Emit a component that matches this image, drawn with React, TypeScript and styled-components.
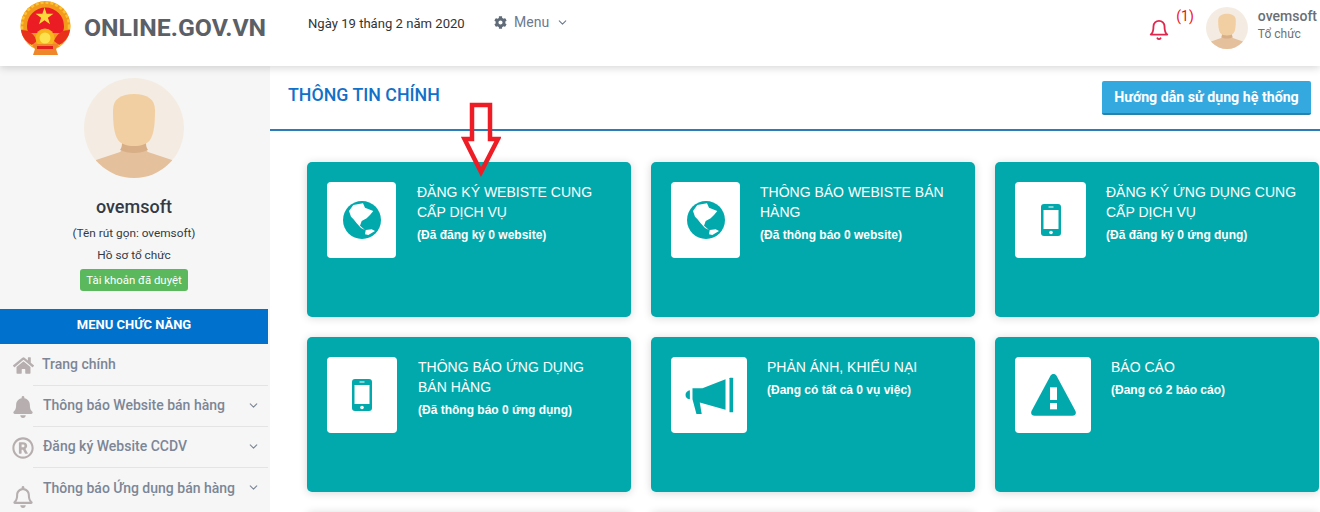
import React from "react";
import styled, { createGlobalStyle } from "styled-components";
import { FaHome, FaBell, FaRegBell, FaRegRegistered, FaCog } from "react-icons/fa";
import { FiBell, FiChevronDown } from "react-icons/fi";

const GlobalStyle = createGlobalStyle`
  html, body {
    margin: 0;
    padding: 0;
    height: 100%;
    overflow: hidden;
    background: #fff;
    font-family: Roboto, "Liberation Sans", sans-serif;
  }
  * { box-sizing: border-box; }
`;

const Page = styled.div`
  width: 1320px;
  height: 512px;
  overflow: hidden;
  position: relative;
`;

const Header = styled.header`
  height: 66px;
  display: flex;
  align-items: flex-start;
  background: #fff;
  position: relative;
  z-index: 2;
  box-shadow: 0 2px 8px rgba(0, 0, 0, 0.16);
`;

const Brand = styled.div`
  width: 308px;
  display: flex;
  align-items: center;
  gap: 11px;
  padding: 1px 0 0 19px;
`;

const BrandName = styled.div`
  font-size: 24.8px;
  font-weight: 700;
  color: #5b6067;
  white-space: nowrap;
  margin-top: -1px;
`;

const DateText = styled.div`
  width: 186px;
  font-size: 13.1px;
  line-height: 16px;
  margin-top: 16px;
  color: #333;
  white-space: nowrap;
`;

const TopMenu = styled.div`
  display: flex;
  align-items: center;
  gap: 7px;
  margin-top: 14px;
  font-size: 14px;
  color: #6c7a8f;
  svg:first-child { color: #5f6b78; font-size: 13px; }
`;

const HeaderRight = styled.div`
  margin-left: auto;
  display: flex;
  align-items: flex-start;
  padding: 7px 3px 0 0;
`;

const BellWrap = styled.div`
  display: flex;
  align-items: flex-start;
  gap: 6px;
  margin: 1px 12px 0 0;
  color: #e0284f;
  svg { margin-top: 11px; }
`;

const BellCount = styled.span`
  font-size: 14px;
  line-height: 16px;
  color: #f01010;
`;

const UserText = styled.div`
  margin-left: 10px;
`;

const UserName = styled.div`
  font-size: 14px;
  font-weight: 500;
  line-height: 18px;
  color: #6a6f76;
`;

const UserRole = styled.div`
  font-size: 12px;
  line-height: 18px;
  color: #6d7278;
`;

const Content = styled.div`
  display: grid;
  grid-template-columns: 270px 1fr;
  height: 446px;
`;

const Sidebar = styled.aside`
  background: #f6f6f6;
  padding-top: 12px;
  display: flex;
  flex-direction: column;
`;

const Profile = styled.div`
  display: flex;
  flex-direction: column;
  align-items: center;
  width: 268px;
  height: 231px;
`;

const ProfileName = styled.div`
  font-size: 18px;
  font-weight: 500;
  line-height: 22px;
  margin: 18px 0 4px;
  color: #333a45;
`;

const ProfileLine = styled.div`
  font-size: 11.8px;
  line-height: 22px;
  color: #333a45;
`;

const Badge = styled.div`
  margin-top: 3px;
  height: 22px;
  width: 108px;
  border-radius: 3px;
  background: #5cb85c;
  color: #fff;
  font-size: 11.4px;
  line-height: 22px;
  text-align: center;
`;

const MenuTitle = styled.div`
  width: 268px;
  height: 35px;
  margin-bottom: 1px;
  background: #0072ce;
  color: #fff;
  font-size: 13px;
  font-weight: 700;
  line-height: 32px;
  text-align: center;
`;

const MenuRow = styled.div`
  display: flex;
  align-items: center;
  height: 41px;
  padding-left: 13px;
`;

const MenuIcon = styled.span<{ $drop: number; $size: number }>`
  width: 20px;
  display: flex;
  justify-content: center;
  flex: none;
  color: #b7afaf;
  font-size: ${(p) => p.$size}px;
  margin-top: ${(p) => p.$drop}px;
  svg { flex: none; }
`;

const MenuBody = styled.div<{ $last: boolean; $inset: number }>`
  flex: 1;
  height: 100%;
  margin-right: 2px;
  display: flex;
  align-items: center;
  justify-content: space-between;
  padding: 0 8px 2px ${(p) => p.$inset}px;
  border-bottom: ${(p) => (p.$last ? "none" : "1px solid #e4e4e4")};
  font-size: 14px;
  font-weight: 500;
  color: #7c8696;
  white-space: nowrap;
  svg { color: #7c8696; font-size: 13px; }
`;

const Main = styled.main`
  display: flex;
  flex-direction: column;
  min-width: 0;
`;

const TitleBar = styled.div`
  height: 65px;
  border-bottom: 2px solid #2a7db8;
  display: flex;
  align-items: flex-start;
  justify-content: space-between;
  padding: 15px 9px 0 18px;
`;

const PageTitle = styled.h1`
  margin: 3px 0 0;
  font-size: 17.8px;
  line-height: 22px;
  font-weight: 500;
  color: #1170c8;
`;

const HelpButton = styled.button`
  width: 209px;
  height: 34px;
  border: none;
  border-bottom: 2px solid #2a82aa;
  border-radius: 2px;
  background: #34a9df;
  color: #fff;
  font-family: inherit;
  font-size: 14.2px;
  font-weight: 700;
  padding: 0;
`;

const CardGrid = styled.div`
  display: grid;
  grid-template-columns: repeat(3, 324px);
  grid-auto-rows: 155px;
  gap: 20px;
  padding: 31px 0 0 37px;
`;

const Card = styled.div`
  display: flex;
  align-items: flex-start;
  padding: 20px;
  border-radius: 5px;
  background: #02a9ac;
  box-shadow: 0 1px 8px rgba(0, 0, 0, 0.16);
  font-family: "Liberation Sans", Arial, sans-serif;
  color: #fff;
`;

const IconTile = styled.div<{ $width: number; $gap: number }>`
  width: ${(p) => p.$width}px;
  height: 76px;
  margin-right: ${(p) => p.$gap}px;
  flex: none;
  display: flex;
  align-items: center;
  justify-content: center;
  border-radius: 4px;
  background: #fff;
`;

const CardTitle = styled.div`
  font-size: 14px;
  line-height: 20px;
`;

const CardNote = styled.div`
  font-size: 12px;
  font-weight: 700;
  line-height: 16px;
  margin-top: 5px;
`;

const ArrowMark = styled.svg`
  position: absolute;
  left: 461px;
  top: 102px;
  z-index: 3;
`;

const TEAL = "#02a9ac";

function Emblem() {
  return (
    <svg width="54" height="54" viewBox="0 0 54 54" style={{ flex: "none" }}>
      <circle cx="26.5" cy="25" r="25" fill="#f39a1c" />
      <circle cx="26.5" cy="25" r="23.5" fill="none" stroke="#f9c431" strokeWidth="2.5" strokeDasharray="3 2" />
      <path d="M8 25a18.5 18.5 0 0 1 37 0c0 3-.5 5-2 7H10c-1.500-2-2-4-2-7z" fill="#ec1c24" />
      <polygon
        points="25.500,6.500 27.600,12.800 34.400,12.800 28.900,16.800 31,23.200 25.500,19.300 20,23.200 22.100,16.800 16.600,12.800 23.400,12.800"
        fill="#ffd83a"
      />
      <path d="M2 29c7 0 13 3 16 11l-5 4C7 41 3 36 2 29zM51 29c-7 0-13 3-16 11l5 4c6-3 10-8 11-15z" fill="#e8301c" />
      <circle cx="26" cy="37" r="9.500" fill="#f8b51e" />
      <circle cx="26" cy="37" r="5.500" fill="#fde24f" />
      <path d="M13 43h27l-3 5 2 6H14l2-6z" fill="#f0862a" />
      <path d="M18 45h16v3H18z" fill="#e21f1f" />
    </svg>
  );
}

function Avatar({ size }: { size: number }) {
  return (
    <svg width={size} height={size} viewBox="0 0 100 100" style={{ flex: "none" }}>
      <defs>
        <clipPath id={`avatar-${size}`}>
          <circle cx="50" cy="50" r="50" />
        </clipPath>
      </defs>
      <g clipPath={`url(#avatar-${size})`}>
        <rect width="100" height="100" fill="#f4ece2" />
        <path d="M12 82l24-8c2-1 2-4 2-8h24c0 4 0 7 2 8l24 8v18H12z" fill="#e5c09c" />
        <path d="M38 64h24c0 3 0 5 2 8-4 2-9 3-14 3s-10-1-14-3c2-3 2-5 2-8z" fill="#d7ae86" />
        <path
          d="M29 32c0-11 8-16 21-16s21 5 21 16c0 14-1 24-5 30-3 4-9 6-16 6s-13-2-16-6c-4-6-5-16-5-30z"
          fill="#f2cfa2"
        />
      </g>
    </svg>
  );
}

function GlobeIcon() {
  return (
    <svg width="38" height="38" viewBox="0 0 38 38">
      <circle cx="19" cy="19" r="19" fill={TEAL} />
      <path
        d="M6 10l4.300-6L20 2.300l2 4.400L30.300 10 27 14l-3.300 3.300-5 2.700-1.700 4.700 5 4.300-4-2-4.300-4.700-3.400-4.300L8 15.700z"
        fill="#fff"
      />
      <path d="M22.700 29l6-.7L32 30l-6.700 4-3.300-.7z" fill="#fff" />
    </svg>
  );
}

function PhoneIcon() {
  return (
    <svg width="20" height="32" viewBox="0 0 20 32">
      <rect width="20" height="32" rx="3" fill={TEAL} />
      <rect x="2.500" y="6" width="15" height="19" fill="#fff" />
      <rect x="7.500" y="2.500" width="5" height="1" fill="#fff" />
      <circle cx="10" cy="28.500" r="1.800" fill="#fff" />
    </svg>
  );
}

function HornIcon() {
  return (
    <svg width="49" height="37" viewBox="128 108 147 112">
      <path d="M142 148c-8 2-16 8-12 20 2 4 6 7 12 7z" fill={TEAL} />
      <path d="M150 142h30l70-27v92l-78-22 6 35h-16l-12-45z" fill={TEAL} />
      <rect x="262" y="110" width="11" height="105" rx="2" fill={TEAL} />
    </svg>
  );
}

function WarnIcon() {
  return (
    <svg width="45" height="42" viewBox="0 0 135 126">
      <path d="M58 6c5-8 14-8 19 0l56 104c4 8 0 15-9 15H11c-9 0-13-7-9-15z" fill={TEAL} />
      <rect x="57" y="40" width="21" height="38" fill="#fff" />
      <rect x="57" y="87" width="21" height="19" fill="#fff" />
    </svg>
  );
}

const sideMenu = [
  { label: "Trang chính", icon: <FaHome />, size: 21, inset: 9, more: false, drop: 0 },
  { label: "Thông báo Website bán hàng", icon: <FaBell />, size: 22, inset: 10, more: true, drop: 0 },
  { label: "Đăng ký Website CCDV", icon: <FaRegRegistered />, size: 22, inset: 10, more: true, drop: 0 },
  { label: "Thông báo Ứng dụng bán hàng", icon: <FaRegBell />, size: 22, inset: 10, more: true, drop: 17 },
];

const cards = [
  { title: "ĐĂNG KÝ WEBISTE CUNG CẤP DỊCH VỤ", note: "(Đã đăng ký 0 website)", icon: <GlobeIcon />, width: 69, gap: 21 },
  { title: "THÔNG BÁO WEBISTE BÁN HÀNG", note: "(Đã thông báo 0 website)", icon: <GlobeIcon />, width: 69, gap: 20 },
  { title: "ĐĂNG KÝ ỨNG DỤNG CUNG CẤP DỊCH VỤ", note: "(Đã đăng ký 0 ứng dụng)", icon: <PhoneIcon />, width: 71, gap: 20 },
  { title: "THÔNG BÁO ỨNG DỤNG BÁN HÀNG", note: "(Đã thông báo 0 ứng dụng)", icon: <PhoneIcon />, width: 70, gap: 21 },
  { title: "PHẢN ÁNH, KHIẾU NẠI", note: "(Đang có tất cả 0 vụ việc)", icon: <HornIcon />, width: 76, gap: 20 },
  { title: "BÁO CÁO", note: "(Đang có 2 báo cáo)", icon: <WarnIcon />, width: 76, gap: 20 },
];

export default function App() {
  return (
    <Page>
      <GlobalStyle />
      <Header>
        <Brand>
          <Emblem />
          <BrandName>ONLINE.GOV.VN</BrandName>
        </Brand>
        <DateText>Ngày 19 tháng 2 năm 2020</DateText>
        <TopMenu>
          <FaCog />
          <span>Menu</span>
          <FiChevronDown size={13} />
        </TopMenu>
        <HeaderRight>
          <BellWrap>
            <FiBell size={22} />
            <BellCount>(1)</BellCount>
          </BellWrap>
          <Avatar size={42} />
          <UserText>
            <UserName>ovemsoft</UserName>
            <UserRole>Tổ chức</UserRole>
          </UserText>
        </HeaderRight>
      </Header>
      <Content>
        <Sidebar>
          <Profile>
            <Avatar size={100} />
            <ProfileName>ovemsoft</ProfileName>
            <ProfileLine>(Tên rút gọn: ovemsoft)</ProfileLine>
            <ProfileLine>Hồ sơ tổ chức</ProfileLine>
            <Badge>Tài khoản đã duyệt</Badge>
          </Profile>
          <MenuTitle>MENU CHỨC NĂNG</MenuTitle>
          {sideMenu.map((item, i) => (
            <MenuRow key={item.label}>
              <MenuIcon $drop={item.drop} $size={item.size}>{item.icon}</MenuIcon>
              <MenuBody $last={i === sideMenu.length - 1} $inset={item.inset}>
                <span>{item.label}</span>
                {item.more && <FiChevronDown />}
              </MenuBody>
            </MenuRow>
          ))}
        </Sidebar>
        <Main>
          <TitleBar>
            <PageTitle>THÔNG TIN CHÍNH</PageTitle>
            <HelpButton>Hướng dẫn sử dụng hệ thống</HelpButton>
          </TitleBar>
          <CardGrid>
            {cards.map((card) => (
              <Card key={card.title}>
                <IconTile $width={card.width} $gap={card.gap}>
                  {card.icon}
                </IconTile>
                <div>
                  <CardTitle>{card.title}</CardTitle>
                  <CardNote>{card.note}</CardNote>
                </div>
              </Card>
            ))}
            <Card />
            <Card />
            <Card />
          </CardGrid>
        </Main>
      </Content>
      <ArrowMark width="40" height="76" viewBox="0 0 40 76">
        <path d="M11 3h18v34h8L20 70 3.500 37H11z" fill="none" stroke="#ee1c25" strokeWidth="4.5" />
      </ArrowMark>
    </Page>
  );
}
